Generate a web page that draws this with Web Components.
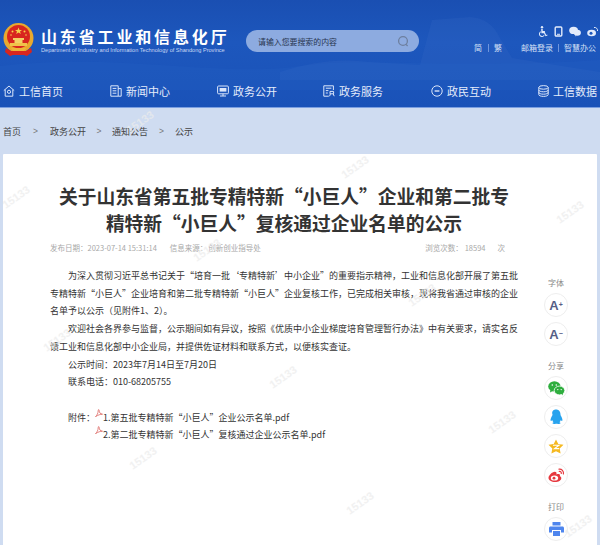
<!DOCTYPE html>
<html lang="zh-CN">
<head>
<meta charset="utf-8">
<title>山东省工业和信息化厅</title>
<style>
  html, body { margin: 0; padding: 0; height: 545px; overflow: hidden; }
  body { background: #cfdcf1; font-family: "Noto Sans CJK SC", sans-serif; color: #333; }
</style>
</head>
<body>
<site-header></site-header>
<bread-crumb>
  <a>首页</a><a>政务公开</a><a>通知公告</a><a>公示</a>
</bread-crumb>
<article-card>
  <h1 slot="title">关于山东省第五批专精特新“小巨人”企业和第二批专精特新“小巨人”复核通过企业名单的公示</h1>
  <p>为深入贯彻习近平总书记关于“培育一批‘专精特新’中小企业”的重要指示精神，工业和信息化部开展了第五批专精特新“小巨人”企业培育和第二批专精特新“小巨人”企业复核工作，已完成相关审核，现将我省通过审核的企业名单予以公示（见附件1、2）。</p>
  <p>欢迎社会各界参与监督，公示期间如有异议，按照《优质中小企业梯度培育管理暂行办法》中有关要求，请实名反馈工业和信息化部中小企业局，并提供佐证材料和联系方式，以便核实查证。</p>
  <p>公示时间：2023年7月14日至7月20日</p>
  <p>联系电话：010-68205755</p>
</article-card>
<script>
class SiteHeader extends HTMLElement {
  connectedCallback() {
    const root = this.attachShadow({ mode: 'open' })
    root.innerHTML = `
      <style>
        :host { display: block; position: relative; height: 108px; overflow: hidden;
          background: linear-gradient(180deg, #1a4fb2 0%, #1d57bd 40%, #1a52b8 100%);
          border-bottom: 1px solid #7c9fe0; box-sizing: border-box; }
        .hill { position: absolute; left: 0; top: 0; width: 600px; height: 108px; }
        .top { position: relative; display: flex; align-items: flex-start; height: 72px; padding: 23px 4px 0 3px; box-sizing: border-box; }
        .logo { display: flex; gap: 7px; width: 243px; flex: none; }
        .logo svg { flex: none; }
        .name { color: #fff; font-size: 16px; line-height: 18px; font-weight: 700; letter-spacing: 2.85px; margin-top: 4px; white-space: nowrap; }
        .en { color: #c8d8f5; font: 5.6px/7px "Liberation Sans", sans-serif; white-space: nowrap; margin-top: 1.5px; }
        .search { display: flex; align-items: center; justify-content: space-between; width: 173px; height: 22px; margin-top: 7px;
          padding: 0 10px 0 12px; box-sizing: border-box; border-radius: 11px; background: #8dabe0; color: #27344f; font-size: 7.9px; }
        .tools { margin-left: auto; display: flex; flex-direction: column; align-items: flex-end; }
        .icons { display: flex; gap: 6px; height: 16px; margin: 0 -2px 0 0; align-items: center; }
        .links { display: flex; align-items: center; color: #d5e0f6; font-size: 8px; line-height: 14px; margin-top: 2px; white-space: nowrap; }
        .links i { width: 1px; height: 8px; background: #6f95dc; margin: 0 5.5px; }
        .links i.after { margin: 0 5px; }
        .links span.gap { width: 19px; }
        nav { position: relative; display: flex; padding: 0 0 0 3px; height: 36px; }
        nav a { display: flex; align-items: flex-start; gap: 4px; width: 107px; flex: none; color: #e6edfb; font-size: 11px; line-height: 16px; padding-top: 11px; box-sizing: border-box; white-space: nowrap; }
        nav svg { flex: none; margin-top: 2px; }
      </style>
      <svg class="hill" viewBox="0 0 600 108">
        <path d="M280 72 C310 62 340 58 370 62 L420 65 L432 20 L470 17 C486 18 494 26 500 38 L512 58 L600 72 L600 80 L280 80Z" fill="#3d6fc9" opacity=".2"/>
        <path d="M0 66 C120 52 220 78 300 66 C360 56 440 70 600 60 L600 90 L0 90Z" fill="#2a63c8" opacity=".2"/>
      </svg>
      <div class="top">
        <div class="logo">
          <svg width="31" height="34" viewBox="0 0 31 34">
            <circle cx="15.5" cy="15" r="15" fill="#e9a92e"/>
            <circle cx="15.5" cy="13.5" r="11.5" fill="#d8261f"/>
            <path d="M7 20h17v3H7z" fill="#f0c24a"/>
            <path d="M10 15h11v2H10zM11.5 17h8v3h-8z" fill="#f4d063"/>
            <path d="M15.5 4.5l1 2.4 2.5.1-2 1.5.8 2.4-2.3-1.4-2.3 1.4.8-2.4-2-1.5 2.5-.1z" fill="#f6d24b"/>
            <circle cx="9.5" cy="8.5" r="1" fill="#f6d24b"/><circle cx="21.5" cy="8.5" r="1" fill="#f6d24b"/>
            <circle cx="8" cy="12" r=".8" fill="#f6d24b"/><circle cx="23" cy="12" r=".8" fill="#f6d24b"/>
            <path d="M3 25l5 3h15l5-3 1 4-5 4-3-1h-11l-3 1-5-4z" fill="#d8261f"/>
            <path d="M8 25h15l-2 3h-11z" fill="#edb63a"/>
          </svg>
          <div>
            <div class="name">山东省工业和信息化厅</div>
            <div class="en">Department of Industry and Information Technology of Shandong Province</div>
          </div>
        </div>
        <div class="search">
          <span>请输入您要搜索的内容</span>
          <svg width="12" height="12" viewBox="0 0 12 12" fill="none" stroke="#6d7f9f" stroke-width="1.3"><circle cx="6" cy="6" r="4.4"/><path d="M9 9.4l1.6 1.6"/></svg>
        </div>
        <div class="tools">
          <div class="icons">
            <svg width="10" height="11" viewBox="0 0 10 11" fill="#e3ebfb"><circle cx="4" cy="1.3" r="1.2"/><path d="M3.2 3h1.5v2h2.2v1H4.7l2.1 0 1.4 3 1-.4.3.8-1.9.8-1.6-3H3.4z"/><path d="M2.8 5.2v1A2.1 2.1 0 1 0 6 8.7l.5.9A3 3 0 1 1 2.8 5.2z"/></svg>
            <svg width="9" height="11" viewBox="0 0 9 11" fill="none" stroke="#e3ebfb" stroke-width="1.4"><rect x="1.2" y="1" width="6.6" height="9" rx="1"/><path d="M3 8.3h3" stroke-width="1"/></svg>
            <svg width="12" height="11" viewBox="0 0 12 11" fill="#e3ebfb"><ellipse cx="4.6" cy="4.4" rx="4.4" ry="3.6"/><ellipse cx="8.3" cy="6.8" rx="3.6" ry="3"/><path d="M6 9.5l1 1 .4-1.2z"/></svg>
            <svg width="11" height="11" viewBox="0 0 11 11" fill="#e3ebfb"><ellipse cx="4.6" cy="7" rx="4.4" ry="3.2"/><path d="M7 1.5a3 3 0 0 1 3.5 3.5" fill="none" stroke="#e3ebfb"/><circle cx="4" cy="7.2" r="1.5" fill="#1d57bd"/></svg>
          </div>
          <div class="links">
            <span>简</span><i></i><span>繁</span><span class="gap"></span><span>邮箱登录</span><i class="after"></i><span>智慧办公</span>
          </div>
        </div>
      </div>
      <nav>
        <a><svg width="12" height="12" viewBox="0 0 12 12" fill="none" stroke="#dbe6fa"><path d="M.8 5.6L6 1l5.2 4.6M2.2 4.6v6.6h7.6V4.6"/><circle cx="6" cy="6.8" r="1.6"/></svg>工信首页</a>
        <a><svg width="12" height="12" viewBox="0 0 12 12" fill="none" stroke="#dbe6fa"><path d="M.8.8h7.4v10.4H.8zM8.2 3.6h3v7.6h-3M2.6 3.4h3.8M2.6 5.8h3.8M2.6 8.2h3.8"/></svg>新闻中心</a>
        <a><svg width="12" height="12" viewBox="0 0 12 12" fill="none" stroke="#dbe6fa"><rect x=".6" y="1" width="10.8" height="7.8" rx="1"/><path d="M3 11h6M6 8.8V11"/><rect x="2.6" y="3" width="6.8" height="3.6" fill="#dbe6fa" stroke="none"/></svg>政务公开</a>
        <a style="width:108px;margin-left:-1px"><svg width="12" height="12" viewBox="0 0 12 12" fill="none" stroke="#dbe6fa"><path d="M10.4 5V.8H.8v10.4h5M2.8 3.2h5.6M2.8 5.6h2.6M2.8 8h2"/><path d="M7 6.4h3.600v2.400H7zM7.400 8.800L6.600 11.200M10.200 8.800l1 2.400"/></svg>政务服务</a>
        <a><svg width="12" height="12" viewBox="0 0 12 12" fill="none" stroke="#dbe6fa"><circle cx="6" cy="6" r="5.2"/><path d="M3.6 6h4.8" stroke-width="1.4"/></svg>政民互动</a>
        <a><svg width="11" height="12" viewBox="0 0 11 12" fill="none" stroke="#dbe6fa"><ellipse cx="5.5" cy="2.4" rx="4.7" ry="1.8"/><path d="M.8 2.4v7.2c0 1 2.1 1.8 4.7 1.8s4.7-.8 4.7-1.8V2.4M.8 5c0 1 2.1 1.8 4.7 1.8S10.200 6 10.200 5M.8 7.400c0 1 2.100 1.800 4.700 1.800s4.700-.8 4.700-1.800"/></svg>工信数据</a>
      </nav>`
  }
}

class BreadCrumb extends HTMLElement {
  connectedCallback() {
    const root = this.attachShadow({ mode: 'open' })
    root.innerHTML = `
      <style>
        :host { display: flex; align-items: center; height: 46px; padding-left: 3px; box-sizing: border-box; font-size: 9px; color: #444; }
      </style>
      <slot></slot>`
    // separators go between the slotted links
    const widths = [29, 26, 27]
    const links = [...this.querySelectorAll('a')]
    links.slice(0, -1).forEach((a, i) => {
      const sep = document.createElement('a')
      sep.textContent = '>'
      sep.style.cssText = 'color:#777;font:8.5px "Liberation Sans",sans-serif;text-align:center;width:' + widths[i] + 'px'
      a.after(sep)
    })
  }
}

class SideTools extends HTMLElement {
  connectedCallback() {
    const root = this.attachShadow({ mode: 'open' })
    root.innerHTML = `
      <style>
        :host { display: flex; flex-direction: column; align-items: center; width: 24px; color: #888; font-size: 8px; }
        .label { line-height: 12px; white-space: nowrap; }
        .btn { display: flex; align-items: center; justify-content: center; width: 24px; height: 24px; box-sizing: border-box; border: 1px solid #eeeeee;
          border-radius: 50%; background: #fff; margin-top: 5px; color: #565f86; font: 700 13px/1 "Liberation Sans", sans-serif; }
        .group { display: flex; flex-direction: column; align-items: center; }
        sup { font-size: 7px; line-height: 0; vertical-align: 4px; }
        .g2 { margin-top: 14px; }
        .g3 { margin-top: 14px; }
      </style>
      <div class="group">
        <div class="label">字体</div>
        <div class="btn" style="margin-top:4px">A<sup>+</sup></div>
        <div class="btn">A<sup>−</sup></div>
      </div>
      <div class="group g2">
        <div class="label">分享</div>
        <div class="btn" style="margin-top:4px"><svg width="17" height="15" viewBox="0 0 17 15" fill="#2eae3e">
          <ellipse cx="6.400" cy="5.400" rx="6.200" ry="5.200"/><path d="M2.500 8.500L2 11.500 5.500 9.500z"/>
          <ellipse cx="11.500" cy="9.500" rx="5.300" ry="4.400" stroke="#fff" stroke-width=".8"/><path d="M13.500 12.500l1.500 2-.2-3z"/>
          <g fill="#fff"><circle cx="4.300" cy="4" r=".8"/><circle cx="8.300" cy="4" r=".8"/><circle cx="9.800" cy="8.600" r=".7"/><circle cx="13.200" cy="8.600" r=".7"/></g></svg></div>
        <div class="btn"><svg width="14" height="16" viewBox="0 0 14 16" fill="#27a3ee"><path d="M7 .5c3 0 4.500 2.300 4.500 5 0 .8.300 1.200.8 2 .9 1.500 1.500 3.500 1 4.300-.3.400-1-.1-1.500-.8-.2 1-.7 1.800-1.400 2.300.9.300 1.300.8 1 1.300-.3.500-2 .6-3.200.2-.4-.1-1-.1-1.400 0-1.200.4-2.900.3-3.200-.2-.3-.5.100-1 1-1.300-.7-.5-1.200-1.300-1.400-2.300-.5.700-1.200 1.200-1.500.8-.5-.8.100-2.800 1-4.300.5-.8.800-1.200.8-2C2.500 2.800 4 .5 7 .5z"/></svg></div>
        <div class="btn"><svg width="16" height="15" viewBox="0 0 16 15"><path d="M8 .4l2.300 4.700 5.200.7-3.800 3.600.9 5.200L8 12.200l-4.600 2.400.9-5.200L.5 5.800l5.200-.7z" fill="#f5b921"/><path d="M5 6.200h6L6.500 9.600h4.700" fill="none" stroke="#fff" stroke-width="1.100"/></svg></div>
        <div class="btn"><svg width="17" height="15" viewBox="0 0 17 15" fill="none"><path d="M7 14c-3.600 0-6.500-1.700-6.500-4.200C.5 7.600 4 3.800 6.800 3.800c1.700 0 2 1.300 1.600 2.600 1.600-.6 3.600-.7 3.600 1 0 .5-.2.800-.2.900 1 .3 1.500 1 1.500 1.900C13.300 12.200 10.600 14 7 14z" fill="#e6393f"/><ellipse cx="6.500" cy="10" rx="3.700" ry="2.600" fill="#fff"/><circle cx="6" cy="10.200" r="1.400" fill="#e6393f"/><path d="M11 1.200c2.700-.4 5 2 4.400 4.800M11.300 3.400c1.300-.2 2.200.9 2 2.100" stroke="#e6393f" stroke-width="1.200" stroke-linecap="round"/></svg></div>
      </div>
      <div class="group g3">
        <div class="label">打印</div>
        <div class="btn" style="margin-top:4px"><svg width="15" height="14" viewBox="0 0 15 14" fill="#4f86ee"><path d="M3.500 0h8v3.500h-8z"/><path d="M1.500 4.500h12c.8 0 1.500.7 1.500 1.500v4.500h-3V8H3v2.500H0V6c0-.8.700-1.500 1.500-1.500z"/><path d="M4 9h7v5H4z"/></svg></div>
      </div>`
  }
}

class WaterMarks extends HTMLElement {
  connectedCallback() {
    const root = this.attachShadow({ mode: 'open' })
    const spots = [[140,122],[355,167],[16,197],[570,212],[207,250],[422,295],[57,340],[283,377],[502,422],[143,458],[360,503],[578,526]]
    root.innerHTML = `
      <style>
        :host { position: absolute; left: 0; top: 0; width: 600px; height: 545px; overflow: hidden; pointer-events: none; }
        b { position: absolute; color: #ececec; font: 700 11px/12px "Liberation Sans", sans-serif; transform: translate(-50%, -50%) rotate(-35deg); opacity: .7; }
      </style>
      ${spots.map(s => `<b style="left:${s[0]}px;top:${s[1]}px">15133</b>`).join('')}`
  }
}

class ArticleCard extends HTMLElement {
  connectedCallback() {
    const pdf = `<svg class="pdf" width="8" height="8" viewBox="0 0 8 8" fill="none" stroke="#d9534f" stroke-width=".7"><path d="M.5 7.500C2 6.500 3.200 4 3.200 1.500c0-1.200 1-1.200 1 0 0 2 1 3.500 3.300 3.700-2.200 0-4.500.8-6.500 2.300z"/></svg>`
    const root = this.attachShadow({ mode: 'open' })
    root.innerHTML = `
      <style>
        :host { display: flex; margin: 0 3px; height: 400px; background: #fff; padding: 28px 0 0 47px; box-sizing: border-box; border-radius: 1px 1px 0 0; }
        .main { width: 468px; flex: none; }
        ::slotted(h1) { margin: 0; font-size: 18.750px; line-height: 27px; font-weight: 700; color: #333; text-align: center; }
        .meta { display: flex; margin-top: 4px; height: 16px; font-size: 7.5px; line-height: 16px; color: #a8a8a8; white-space: nowrap; }
        .meta .src { margin-left: 13px; }
        .meta .src em { font-style: normal; margin-left: 1px; }
        .meta .views { margin-left: auto; margin-right: 13px; }
        .meta .views em { font-style: normal; margin: 0 12px 0 2px; }
        .body { margin-top: 11px; font-size: 9px; line-height: 17.7px; color: #333; }
        ::slotted(p) { margin: 0; text-indent: 18px; }
        .files { margin-top: 17.7px; display: flex; padding-left: 18px; }
        .files .row { display: flex; align-items: flex-start; }
        .pdf { flex: none; }
        .side { margin: 95px 0 0 26px; flex: none; }
      </style>
      <div class="main">
        <slot name="title"></slot>
        <div class="meta">
          <span>发布日期：2023-07-14 15:31:14</span>
          <span class="src">信息来源：<em>创新创业指导处</em></span>
          <span class="views">浏览次数：<em>18594</em>次</span>
        </div>
        <div class="body">
          <slot></slot>
          <div class="files">
            <span>附件：</span>
            <div class="list">
              <div class="row">${pdf}<span>1.第五批专精特新“小巨人”企业公示名单.pdf</span></div>
              <div class="row">${pdf}<span>2.第二批专精特新“小巨人”复核通过企业公示名单.pdf</span></div>
            </div>
          </div>
        </div>
      </div>
      <side-tools class="side"></side-tools>
      <water-marks></water-marks>`
  }
}

customElements.define('site-header', SiteHeader)
customElements.define('bread-crumb', BreadCrumb)
customElements.define('side-tools', SideTools)
customElements.define('water-marks', WaterMarks)
customElements.define('article-card', ArticleCard)
</script>
</body>
</html>
